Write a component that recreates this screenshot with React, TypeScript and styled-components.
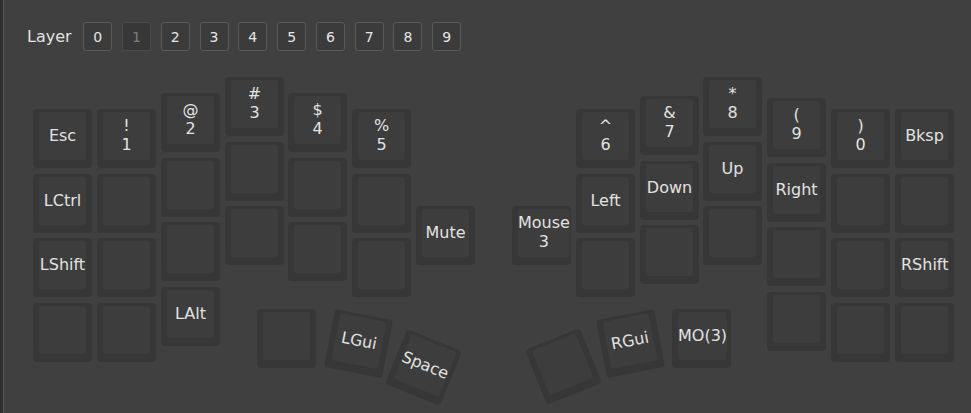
import React from 'react';
import styled, { createGlobalStyle } from 'styled-components';

const GlobalStyle = createGlobalStyle`
  html, body {
    margin: 0;
    padding: 0;
    background: #2f2f2f;
  }

  body {
    font-family: "DejaVu Sans", Verdana, sans-serif;
    color: #e2e2e2;
  }
`;

// one key unit on the canvas, in px (rows are spaced a touch wider than columns)
const UX = 63.85;
const UY = 64.5;
const KEY = 59;
const PAD_X = 29;
const PAD_Y = 26;

type KeyDef = { x: number; y: number; label?: string; r?: number };

const keys: KeyDef[] = [
  // left half
  { x: 0, y: 0.5, label: 'Esc' }, { x: 0, y: 1.5, label: 'LCtrl' }, { x: 0, y: 2.5, label: 'LShift' }, { x: 0, y: 3.5 },
  { x: 1, y: 0.5, label: '!\n1' }, { x: 1, y: 1.5 }, { x: 1, y: 2.5 }, { x: 1, y: 3.5 },
  { x: 2, y: 0.25, label: '@\n2' }, { x: 2, y: 1.25 }, { x: 2, y: 2.25 }, { x: 2, y: 3.25, label: 'LAlt' },
  { x: 3, y: 0, label: '#\n3' }, { x: 3, y: 1 }, { x: 3, y: 2 },
  { x: 4, y: 0.25, label: '$\n4' }, { x: 4, y: 1.25 }, { x: 4, y: 2.25 },
  { x: 5, y: 0.5, label: '%\n5' }, { x: 5, y: 1.5 }, { x: 5, y: 2.5 },
  { x: 6, y: 2, label: 'Mute' },
  // left thumb cluster
  { x: 3.51, y: 3.59 },
  { x: 4.64, y: 3.68, label: 'LGui', r: 11 },
  { x: 5.66, y: 4.05, label: 'Space', r: 22 },
  // right half
  { x: 7.5, y: 2, label: 'Mouse\n3' },
  { x: 8.5, y: 0.5, label: '^\n6' }, { x: 8.5, y: 1.5, label: 'Left' }, { x: 8.5, y: 2.5 },
  { x: 9.5, y: 0.3, label: '&\n7' }, { x: 9.5, y: 1.3, label: 'Down' }, { x: 9.5, y: 2.3 },
  { x: 10.5, y: 0, label: '*\n8' }, { x: 10.5, y: 1, label: 'Up' }, { x: 10.5, y: 2 },
  { x: 11.5, y: 0.33, label: '(\n9' }, { x: 11.5, y: 1.33, label: 'Right' }, { x: 11.5, y: 2.33 }, { x: 11.5, y: 3.34 },
  { x: 12.5, y: 0.5, label: ')\n0' }, { x: 12.5, y: 1.5 }, { x: 12.5, y: 2.5 }, { x: 12.5, y: 3.5 },
  { x: 13.5, y: 0.5, label: 'Bksp' }, { x: 13.5, y: 1.5 }, { x: 13.5, y: 2.5, label: 'RShift' }, { x: 13.5, y: 3.5 },
  // right thumb cluster
  { x: 7.84, y: 4.03, r: -22 },
  { x: 8.89, y: 3.67, label: 'RGui', r: -11 },
  { x: 10, y: 3.59, label: 'MO(3)' },
];

const Window = styled.div`
  display: flex;
  height: 413px;
  padding-left: 3px;
  background: #2f2f2f;
`;

const Panel = styled.main`
  flex: 1;
  display: flex;
  flex-direction: column;
  background: #404040;
  border-left: 1px solid #5a5a5a;
  overflow: hidden;
`;

const LayerBar = styled.div`
  display: flex;
  align-items: center;
  padding: 22px 0 0 23px;
`;

const LayerLabel = styled.span`
  font-size: 16px;
  margin-right: 11.5px;
`;

const LayerButton = styled.button<{ $active?: boolean }>`
  width: 29px;
  height: 29px;
  margin: 0 9.8px 0 0;
  padding: 0;
  border-radius: 3px;
  border: 1px solid ${p => (p.$active ? '#4a4a4a' : '#5a5a5a')};
  background: ${p => (p.$active ? '#373737' : '#3b3b3b')};
  color: ${p => (p.$active ? '#7c7c7c' : '#e6e6e6')};
  font-family: "DejaVu Sans", Verdana, sans-serif;
  font-size: 14px;
  line-height: 1;
`;

const Canvas = styled.div`
  position: relative;
  flex: 1;
`;

const KeyCap = styled.div.attrs<{ $x: number; $y: number; $r?: number }>(p => ({
  style: {
    left: Math.round(PAD_X + p.$x * UX),
    top: Math.round(PAD_Y + p.$y * UY),
    transform: p.$r ? `rotate(${p.$r}deg)` : undefined,
  },
}))<{ $x: number; $y: number; $r?: number }>`
  position: absolute;
  box-sizing: border-box;
  width: ${KEY}px;
  height: ${KEY}px;
  padding: 3px 6px 8px 6px;
  display: flex;
  background: #373737;
  border-radius: 4px;
`;

const KeyTop = styled.div`
  flex: 1;
  display: flex;
  align-items: center;
  justify-content: center;
  background: #3d3d3d;
  border-radius: 3px;
  font-size: 16px;
  line-height: 18.6px;
  text-align: center;
  white-space: pre;
  color: #e2e2e2;
`;

const layers = ['0', '1', '2', '3', '4', '5', '6', '7', '8', '9'];

export default function App() {
  return (
    <>
      <GlobalStyle />
      <Window>
        <Panel>
          <LayerBar>
            <LayerLabel>Layer</LayerLabel>
            {layers.map(l => (
              <LayerButton key={l} $active={l === '1'}>{l}</LayerButton>
            ))}
          </LayerBar>
          <Canvas>
            {keys.map((k, i) => (
              <KeyCap key={i} $x={k.x} $y={k.y} $r={k.r}>
                <KeyTop>{k.label ?? ''}</KeyTop>
              </KeyCap>
            ))}
          </Canvas>
        </Panel>
      </Window>
    </>
  );
}
